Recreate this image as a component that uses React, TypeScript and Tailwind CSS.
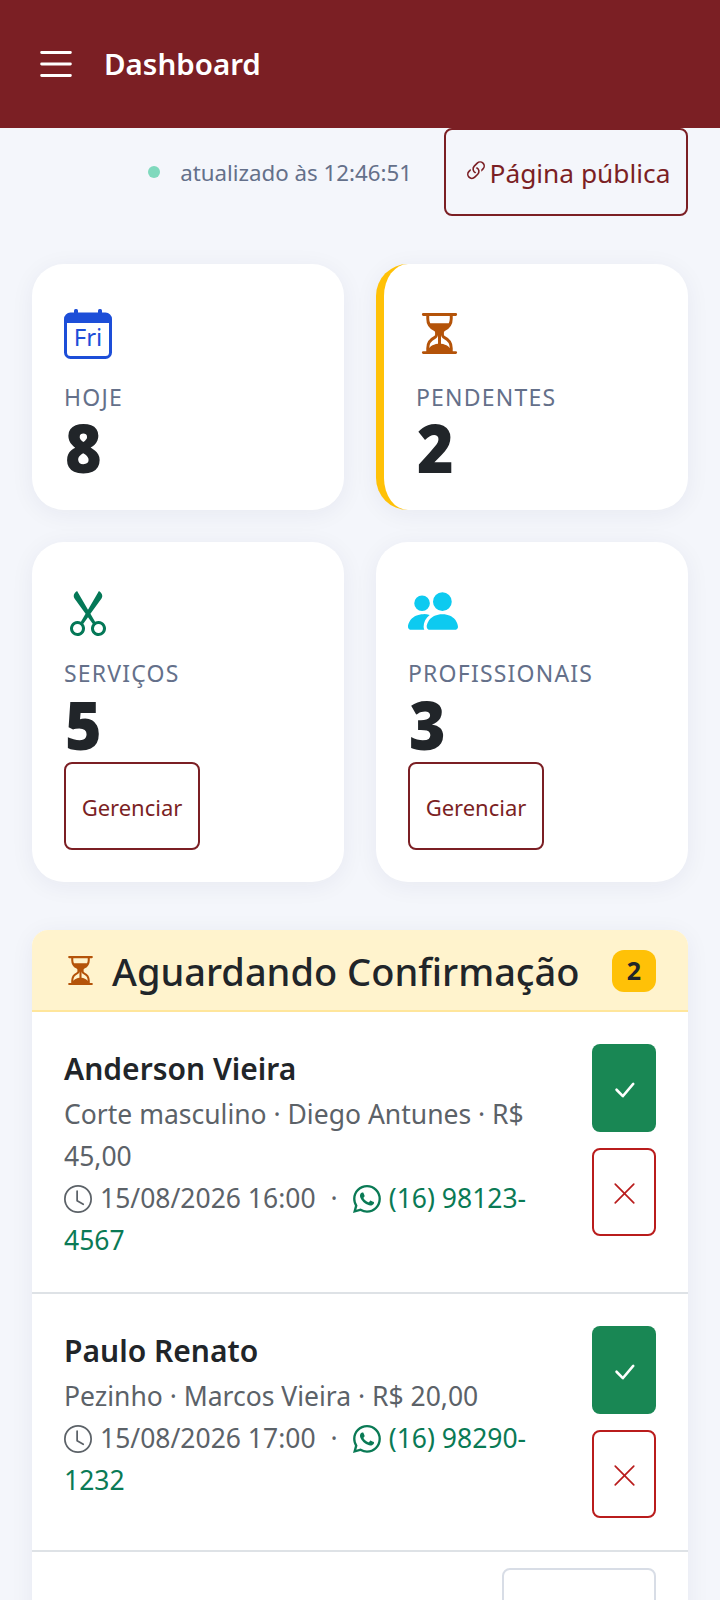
import React from "react";
import { BsList, BsLink45Deg, BsHourglassSplit, BsScissors, BsPeopleFill, BsClock, BsWhatsapp, BsCheckLg, BsXLg } from "react-icons/bs";

function Row({ name, desc, date, phone }: { name: string; desc: string; date: string; phone: string }) {
  return (
    <div className="flex justify-between gap-4 border-b-2 border-[#dee2e6] pl-8 pr-8 pt-8 pb-[31px]">
      <div className="w-[492px] mt-[2px]">
        <div className="text-[30px] leading-[46px] font-semibold text-[#212529]">{name}</div>
        <div className="text-[26.5px] leading-[42px] text-[#5c6268] mt-[1px]">{desc}</div>
        <div className="text-[26.5px] leading-[42px] text-[#5c6268]">
          <BsClock className="inline-block align-[-5px] mr-2" size={28} />
          {date}
          <span className="mx-[15px]">·</span>
          <span className="text-[#0a7a55]">
            <BsWhatsapp className="inline-block align-[-5px] mr-2" size={28} />
            {phone}
          </span>
        </div>
      </div>
      <div className="flex flex-col gap-4 w-16 shrink-0 mb-[1px]">
        <div className="h-[88px] rounded-lg bg-[#198754] flex items-center justify-center text-white pt-[4px]">
          <BsCheckLg size={28} />
        </div>
        <div className="h-[88px] rounded-lg border-2 border-[#b91c1c] flex items-center justify-center text-[#b91c1c] pt-[3px]">
          <BsXLg size={27} />
        </div>
      </div>
    </div>
  );
}

function Manage() {
  return (
    <div className="mt-[4px] w-[136px] h-[88px] rounded-lg border-2 border-[#7b1f24] flex items-center justify-center text-[22px] text-[#7b1f24] pt-[2px]">
      Gerenciar
    </div>
  );
}

const cardClass = "rounded-[32px] bg-white shadow-[0_4px_24px_rgba(30,41,89,0.06)]";
const labelClass = "text-[23px] leading-[34px] tracking-[1.2px] text-[#64708a]";
const numClass = "block w-fit origin-left scale-x-[0.92] ml-[1px] text-[68px] leading-[68px] font-black text-[#212529]";

export default function App() {
  return (
    <div className="h-[1600px] overflow-hidden bg-[#f4f6fb] font-['Noto_Sans',sans-serif]">
      <header className="h-[128px] bg-[#7b1f24] flex items-center pl-[33px] gap-[25px]">
        <BsList className="text-white" size={46} />
        <span className="text-[29.5px] font-semibold text-white pt-[1px]">Dashboard</span>
      </header>
      <div className="flex items-center justify-end pr-8">
        <span className="w-3 h-3 rounded-full bg-[#7fd9bd] mr-5" />
        <span className="text-[22.3px] text-[#64708a] mr-8 pt-[2px]">atualizado às 12:46:51</span>
        <div className="h-[88px] w-[244px] rounded-lg border-2 border-[#7b1f24] flex items-center justify-center text-[#7b1f24] text-[26.3px] pt-[4px] pl-[2px]">
          <BsLink45Deg size={26} className="mb-[6px]" />
          Página pública
        </div>
      </div>
      <div className="grid grid-cols-2 gap-8 px-8 mt-12">
        <div className={`${cardClass} h-[246px] p-8`}>
          <div className="h-[84px] pt-[13px]">
            <svg width="48" height="50" viewBox="0 0 48 50" className="text-[#1d4ed8]">
              <rect x="1.5" y="5" width="45" height="43.5" rx="5" fill="none" stroke="currentColor" strokeWidth="3" />
              <path d="M1.5 14V10a5 5 0 0 1 5-5H41.500a5 5 0 0 1 5 5v4z" fill="currentColor" />
              <rect x="10" y="0" width="4" height="6" rx="1.500" fill="currentColor" />
              <rect x="34" y="0" width="4" height="6" rx="1.500" fill="currentColor" />
              <text x="24" y="37" textAnchor="middle" fontSize="24" fill="currentColor" fontFamily="Noto Sans, sans-serif">Fri</text>
            </svg>
          </div>
          <div className={labelClass}>HOJE</div>
          <div className={`${numClass} -mt-[1px]`}>8</div>
        </div>
        <div className={`${cardClass} h-[246px] p-8 border-l-8 border-[#ffc107]`}>
          <div className="h-[84px] pt-[14px]">
            <BsHourglassSplit size={47} className="text-[#b45309]" />
          </div>
          <div className={labelClass}>PENDENTES</div>
          <div className={`${numClass} -mt-[1px]`}>2</div>
        </div>
        <div className={`${cardClass} p-8`}>
          <div className="h-[82px] pt-[14px]">
            <BsScissors size={48} className="text-[#047857]" />
          </div>
          <div className={labelClass}>SERVIÇOS</div>
          <div className={numClass}>5</div>
          <Manage />
        </div>
        <div className={`${cardClass} p-8`}>
          <div className="h-[82px] pt-[12px]">
            <BsPeopleFill size={50} className="text-[#0dcaf0]" />
          </div>
          <div className={labelClass}>PROFISSIONAIS</div>
          <div className={numClass}>3</div>
          <Manage />
        </div>
      </div>
      <section className="mx-8 mt-12 rounded-2xl bg-white shadow-[0_4px_24px_rgba(30,41,89,0.06)] overflow-hidden">
        <div className="h-[82px] bg-[#fff3cd] border-b-2 border-[#ffe69c] pl-8 pr-8 flex items-center justify-between">
          <div className="flex items-center gap-[15px]">
            <BsHourglassSplit size={33} className="text-[#b45309]" />
            <span className="text-[38px] font-medium text-[#212529] pt-[3px]">Aguardando Confirmação</span>
          </div>
          <span className="w-11 h-[42px] mt-[1px] rounded-xl bg-[#ffc107] flex items-center justify-center text-[25px] font-bold text-[#212529]">2</span>
        </div>
        <Row name="Anderson Vieira" desc="Corte masculino · Diego Antunes · R$ 45,00" date="15/08/2026 16:00" phone="(16) 98123-4567" />
        <Row name="Paulo Renato" desc="Pezinho · Marcos Vieira · R$ 20,00" date="15/08/2026 17:00" phone="(16) 98290-1232" />
        <div className="flex justify-end pr-8 pt-4">
          <div className="w-[154px] h-[88px] rounded-lg border-2 border-[#d8dde6]" />
        </div>
      </section>
    </div>
  );
}
